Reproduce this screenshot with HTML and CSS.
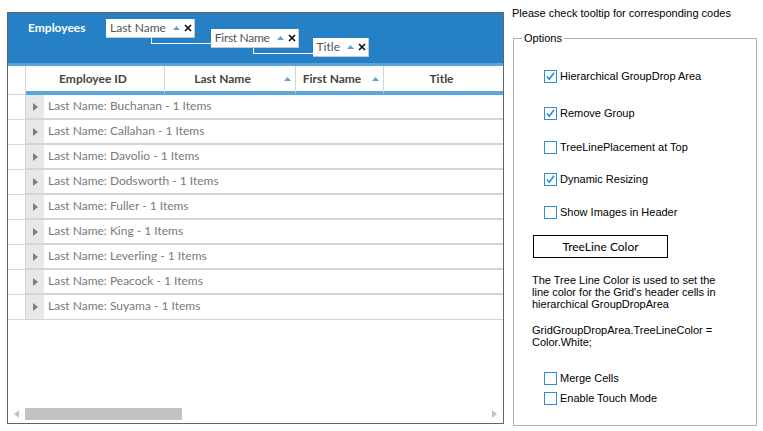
FILE: index.html
```html
<!DOCTYPE html>
<html>
<head>
<meta charset="utf-8">
<link rel="stylesheet" href="styles.css">
</head>
<body>
<div class="page">
  <div class="grid">
    <div class="droparea">
      <div class="caption">Employees</div>
      <div class="chip">
        <span class="chip-text">Last Name</span>
        <svg class="sort" width="7" height="4" viewBox="0 0 7 4"><path d="M0 4 L3.5 0 L7 4 Z" fill="#5aa5dc"/></svg>
        <svg class="close" width="8" height="8" viewBox="0 0 8 8"><path d="M1 1 L7 7 M7 1 L1 7" stroke="#111" stroke-width="1.7"/></svg>
      </div>
      <div class="chip chip-l2">
        <span class="chip-text">First Name</span>
        <svg class="sort" width="7" height="4" viewBox="0 0 7 4"><path d="M0 4 L3.5 0 L7 4 Z" fill="#5aa5dc"/></svg>
        <svg class="close" width="8" height="8" viewBox="0 0 8 8"><path d="M1 1 L7 7 M7 1 L1 7" stroke="#111" stroke-width="1.7"/></svg>
      </div>
      <div class="chip chip-l3">
        <span class="chip-text">Title</span>
        <svg class="sort" width="7" height="4" viewBox="0 0 7 4"><path d="M0 4 L3.5 0 L7 4 Z" fill="#5aa5dc"/></svg>
        <svg class="close" width="8" height="8" viewBox="0 0 8 8"><path d="M1 1 L7 7 M7 1 L1 7" stroke="#111" stroke-width="1.7"/></svg>
      </div>
    </div>
    <div class="strip"></div>
    <div class="header">
      <div class="hcell hcell-rh"></div>
      <div class="hcell"><span class="htext">Employee ID</span></div>
      <div class="hcell"><span class="htext">Last Name</span><svg class="hsort" width="7" height="4" viewBox="0 0 7 4"><path d="M0 4 L3.5 0 L7 4 Z" fill="#5aa5dc"/></svg></div>
      <div class="hcell"><span class="htext">First Name</span><svg class="hsort" width="7" height="4" viewBox="0 0 7 4"><path d="M0 4 L3.5 0 L7 4 Z" fill="#5aa5dc"/></svg></div>
      <div class="hcell hcell-last"><span class="htext">Title</span></div>
    </div>
    <div class="body">
      <div class="grow"><div class="rh"></div><div class="exp"><svg width="5" height="8" viewBox="0 0 5 8"><path d="M0 0 L5 4 L0 8 Z" fill="#7f7f7f"/></svg></div><div class="gtext">Last Name: Buchanan - 1 Items</div></div>
      <div class="grow"><div class="rh"></div><div class="exp"><svg width="5" height="8" viewBox="0 0 5 8"><path d="M0 0 L5 4 L0 8 Z" fill="#7f7f7f"/></svg></div><div class="gtext">Last Name: Callahan - 1 Items</div></div>
      <div class="grow"><div class="rh"></div><div class="exp"><svg width="5" height="8" viewBox="0 0 5 8"><path d="M0 0 L5 4 L0 8 Z" fill="#7f7f7f"/></svg></div><div class="gtext">Last Name: Davolio - 1 Items</div></div>
      <div class="grow"><div class="rh"></div><div class="exp"><svg width="5" height="8" viewBox="0 0 5 8"><path d="M0 0 L5 4 L0 8 Z" fill="#7f7f7f"/></svg></div><div class="gtext">Last Name: Dodsworth - 1 Items</div></div>
      <div class="grow"><div class="rh"></div><div class="exp"><svg width="5" height="8" viewBox="0 0 5 8"><path d="M0 0 L5 4 L0 8 Z" fill="#7f7f7f"/></svg></div><div class="gtext">Last Name: Fuller - 1 Items</div></div>
      <div class="grow"><div class="rh"></div><div class="exp"><svg width="5" height="8" viewBox="0 0 5 8"><path d="M0 0 L5 4 L0 8 Z" fill="#7f7f7f"/></svg></div><div class="gtext">Last Name: King - 1 Items</div></div>
      <div class="grow"><div class="rh"></div><div class="exp"><svg width="5" height="8" viewBox="0 0 5 8"><path d="M0 0 L5 4 L0 8 Z" fill="#7f7f7f"/></svg></div><div class="gtext">Last Name: Leverling - 1 Items</div></div>
      <div class="grow"><div class="rh"></div><div class="exp"><svg width="5" height="8" viewBox="0 0 5 8"><path d="M0 0 L5 4 L0 8 Z" fill="#7f7f7f"/></svg></div><div class="gtext">Last Name: Peacock - 1 Items</div></div>
      <div class="grow grow-last"><div class="rh"></div><div class="exp"><svg width="5" height="8" viewBox="0 0 5 8"><path d="M0 0 L5 4 L0 8 Z" fill="#7f7f7f"/></svg></div><div class="gtext">Last Name: Suyama - 1 Items</div></div>
    </div>
    <div class="hscroll">
      <div class="sarrow"><svg width="5" height="8" viewBox="0 0 5 8"><path d="M5 0 L0 4 L5 8 Z" fill="#c2c2c2"/></svg></div>
      <div class="strack"><div class="sthumb"></div></div>
      <div class="sarrow"><svg width="5" height="8" viewBox="0 0 5 8"><path d="M0 0 L5 4 L0 8 Z" fill="#c2c2c2"/></svg></div>
    </div>
  </div>

  <div class="panel">
    <div class="hint">Please check tooltip for corresponding codes</div>
    <fieldset class="options">
      <legend class="legend">Options</legend>
      <label class="opt opt-1"><span class="cb"><svg width="11" height="11" viewBox="0 0 11 11"><path d="M2 5.5 L4.3 8.3 L9 1.8" fill="none" stroke="#2b8de0" stroke-width="1.6"/></svg></span>Hierarchical GroupDrop Area</label>
      <label class="opt opt-2"><span class="cb"><svg width="11" height="11" viewBox="0 0 11 11"><path d="M2 5.5 L4.3 8.3 L9 1.8" fill="none" stroke="#2b8de0" stroke-width="1.6"/></svg></span>Remove Group</label>
      <label class="opt opt-3"><span class="cb"></span>TreeLinePlacement at Top</label>
      <label class="opt opt-4"><span class="cb"><svg width="11" height="11" viewBox="0 0 11 11"><path d="M2 5.5 L4.3 8.3 L9 1.8" fill="none" stroke="#2b8de0" stroke-width="1.6"/></svg></span>Dynamic Resizing</label>
      <label class="opt opt-5"><span class="cb"></span>Show Images in Header</label>
      <div class="btn">TreeLine Color</div>
      <p class="desc">The Tree Line Color is used to set the<br>line color for the Grid's header cells in<br>hierarchical GroupDropArea</p>
      <p class="desc desc-code">GridGroupDropArea.TreeLineColor =<br>Color.White;</p>
      <label class="opt opt-6"><span class="cb"></span>Merge Cells</label>
      <label class="opt opt-7"><span class="cb"></span>Enable Touch Mode</label>
    </fieldset>
  </div>
</div>
</body>
</html>
```

FILE: styles.css
```css
* { box-sizing: border-box; }
html, body { margin: 0; padding: 0; background: #fff; }
.page {
  display: flex;
  align-items: flex-start;
  padding: 7px 0 0 7px;
  font-family: "Lato", "Liberation Sans", sans-serif;
}
.grid {
  margin-top: 5px;
  width: 497px;
  height: 412px;
  border: 1px solid #646464;
  display: flex;
  flex-direction: column;
  background: #fff;
}
.droparea {
  height: 50px;
  background: #2680c6;
  display: flex;
  align-items: flex-start;
  padding: 6px 0 0 20px;
}
.caption {
  width: 78px;
  margin-top: 1px;
  line-height: 16px;
  font-size: 12px;
  font-weight: bold;
  color: #fff;
}
.chip {
  position: relative;
  height: 19px;
  display: flex;
  align-items: center;
  background: #fff;
  border-right: 1px solid #c9c9c9;
  border-bottom: 1px solid #c9c9c9;
  padding: 0 2px 0 4px;
}
.chip-text { font-size: 12px; color: #555; line-height: 16px; }
.chip-l2 .chip-text { letter-spacing: -0.3px; }
.sort { margin-left: 7px; }
.close { margin-left: 4px; }
.chip-l2 { margin-top: 10px; margin-left: 16px; }
.chip-l3 { margin-top: 19px; margin-left: 14px; }
.chip-l2::before, .chip-l3::before {
  content: "";
  position: absolute;
  left: -60px;
  width: 60px;
  height: 5px;
  border-left: 1px solid #fff;
  border-bottom: 1px solid #fff;
}
.chip-l2::before { top: 9px; }
.chip-l3::before { top: 10px; }
.strip { height: 3px; background: #5aa5dc; }
.header {
  display: grid;
  grid-template-columns: 18px 139px 131px 88px 1fr;
  height: 29px;
}
.hcell {
  display: flex;
  align-items: center;
  border-right: 1px solid #d4d4d4;
  border-bottom: 4px solid #5aa5dc;
  padding: 0 4px 0 0;
}
.hcell-rh { border-bottom: 1px solid #d4d4d4; }
.hcell-last { border-right: none; }
.htext {
  flex: 1;
  text-align: center;
  font-size: 12px;
  font-weight: bold;
  color: #444;
}
.hsort { margin-left: 4px; }
.body { flex: 1; }
.grow {
  display: flex;
  height: 25px;
}
.rh {
  width: 18px;
  border-right: 1px solid #d4d4d4;
  border-bottom: 1px solid #d8d8d8;
}
.exp {
  width: 18px;
  background: #e8e8e8;
  display: flex;
  align-items: center;
  justify-content: center;
  border-bottom: 2px solid #d4d4d4;
  padding-left: 1px;
}
.gtext {
  flex: 1;
  padding-left: 4px;
  font-size: 12px;
  color: #7a7a7a;
  line-height: 22px;
  border-bottom: 2px solid #d4d4d4;
}
.grow-last .exp, .grow-last .gtext { border-bottom-width: 1px; }
.hscroll {
  height: 12px;
  margin-bottom: 3px;
  display: flex;
}
.sarrow {
  width: 17px;
  display: flex;
  align-items: center;
  justify-content: center;
}
.strack { flex: 1; }
.sthumb { width: 157px; height: 12px; background: #c2c2c2; }

.panel {
  margin-left: 9px;
  width: 244px;
  font-family: "Liberation Sans", Arial, sans-serif;
  font-size: 11px;
  color: #000;
}
.hint { line-height: 13px; margin-left: -1px; }
.options {
  margin: 12px 0 0 0;
  padding: 0 0 0 30px;
  border: 1px solid #b0b0b0;
  height: 394px;
}
.legend {
  margin-left: -22px;
  padding: 0 2px;
  line-height: 13px;
}
.opt {
  display: flex;
  align-items: center;
  line-height: 13px;
}
.cb {
  width: 13px;
  height: 13px;
  border: 1px solid #2b8de0;
  margin-right: 3px;
  display: flex;
  align-items: center;
  justify-content: center;
  background: #fff;
}
.opt-1 { margin-top: 25px; }
.opt-2 { margin-top: 24px; }
.opt-3 { margin-top: 21px; }
.opt-4 { margin-top: 19px; }
.opt-5 { margin-top: 20px; }
.btn {
  margin: 16px 0 0 -11px;
  width: 135px;
  height: 23px;
  border: 1px solid #000;
  display: flex;
  align-items: center;
  justify-content: center;
  font-family: "Lato", "Liberation Sans", sans-serif;
  font-size: 12px;
}
.desc {
  margin: 16px 0 0 -12px;
  line-height: 12px;
}
.desc-code { margin-top: 14px; }
.opt-6 { margin-top: 24px; }
.opt-7 { margin-top: 7px; }
```
